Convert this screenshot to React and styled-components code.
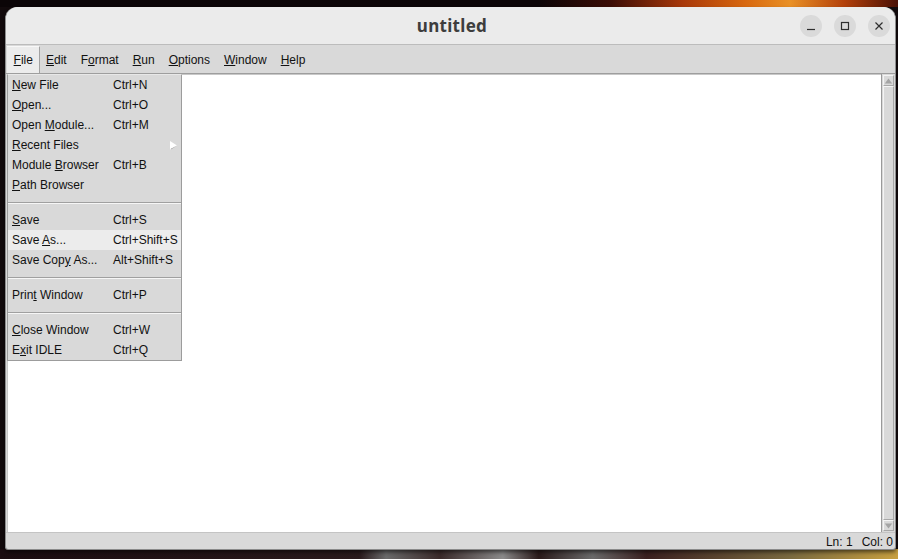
import React from 'react';
import styled, { createGlobalStyle } from 'styled-components';

const GlobalStyle = createGlobalStyle`
    html, body {
        margin: 0;
        padding: 0;
        background: #120a0c;
        overflow: hidden;
    }
`;

const fileMenu = [
    { label: 'New File', key: 'N', accel: 'Ctrl+N' },
    { label: 'Open...', key: 'O', accel: 'Ctrl+O' },
    { label: 'Open Module...', key: 'M', accel: 'Ctrl+M' },
    { label: 'Recent Files', key: 'R', sub: true },
    { label: 'Module Browser', key: 'B', accel: 'Ctrl+B' },
    { label: 'Path Browser', key: 'P' },
    { sep: true },
    { label: 'Save', key: 'S', accel: 'Ctrl+S' },
    { label: 'Save As...', key: 'A', accel: 'Ctrl+Shift+S', hover: true },
    { label: 'Save Copy As...', key: 'y', accel: 'Alt+Shift+S' },
    { sep: true },
    { label: 'Print Window', key: 't', accel: 'Ctrl+P' },
    { sep: true },
    { label: 'Close Window', key: 'C', accel: 'Ctrl+W' },
    { label: 'Exit IDLE', key: 'x', accel: 'Ctrl+Q' },
];

const menus = [
    { label: 'File', key: 'F' },
    { label: 'Edit', key: 'E' },
    { label: 'Format', key: 'o' },
    { label: 'Run', key: 'R' },
    { label: 'Options', key: 'O' },
    { label: 'Window', key: 'W' },
    { label: 'Help', key: 'H' },
];

const Mnemonic = ({ text, letter }) => {
    const i = text.indexOf(letter);
    if (i < 0) return text;
    return (
        <>
            {text.slice(0, i)}
            <u>{text[i]}</u>
            {text.slice(i + 1)}
        </>
    );
};

const App = () => {
    return (
        <Desktop>
            <GlobalStyle />
            <Window>
                <TitleBar>
                    <span />
                    <Title>untitled</Title>
                    <Controls>
                        <RoundButton>
                            <svg width="10" height="10" viewBox="0 0 10 10">
                                <line x1="1" y1="8.5" x2="9" y2="8.5" stroke="#2e2e2e" strokeWidth="1.2" />
                            </svg>
                        </RoundButton>
                        <RoundButton>
                            <svg width="10" height="10" viewBox="0 0 10 10">
                                <rect x="1.5" y="1.5" width="7" height="7" fill="none" stroke="#2e2e2e" strokeWidth="1.2" />
                            </svg>
                        </RoundButton>
                        <RoundButton>
                            <svg width="10" height="10" viewBox="0 0 10 10">
                                <path d="M1.5 1.5 L8.5 8.5 M8.5 1.5 L1.5 8.5" stroke="#2e2e2e" strokeWidth="1.2" />
                            </svg>
                        </RoundButton>
                    </Controls>
                </TitleBar>
                <MenuBar>
                    {menus.map((m) => (
                        <MenuTitle key={m.label} $active={m.label === 'File'}>
                            <Mnemonic text={m.label} letter={m.key} />
                        </MenuTitle>
                    ))}
                </MenuBar>
                <EditorRow>
                    <Editor />
                    <Scrollbar>
                        <ArrowBox>
                            <svg width="11" height="8" viewBox="0 0 11 8">
                                <polygon points="5.5,1 10,7 1,7" fill="#a4a4a4" />
                            </svg>
                        </ArrowBox>
                        <Slider />
                        <ArrowBox>
                            <svg width="11" height="8" viewBox="0 0 11 8">
                                <polygon points="1,1 10,1 5.5,7" fill="#a4a4a4" />
                            </svg>
                        </ArrowBox>
                    </Scrollbar>
                </EditorRow>
                <StatusBar>
                    <span>Ln: 1</span>
                    <span>Col: 0</span>
                </StatusBar>
                <Dropdown>
                    {fileMenu.map((item, i) =>
                        item.sep ? (
                            <Separator key={i} />
                        ) : (
                            <DropItem key={i} $hover={item.hover}>
                                <span>
                                    <Mnemonic text={item.label} letter={item.key} />
                                </span>
                                <span>{item.accel}</span>
                                {item.sub && (
                                    <SubArrow width="7" height="9" viewBox="0 0 7 9">
                                        <polygon points="0,0 7,4.5 0,9" fill="#ffffff" />
                                        <polygon points="2,7.2 7,4.5 0,9" fill="#6e6e6e" />
                                    </SubArrow>
                                )}
                            </DropItem>
                        )
                    )}
                </Dropdown>
            </Window>
        </Desktop>
    );
};

const Desktop = styled.div`
    width: 898px;
    height: 559px;
    overflow: hidden;
    background:
        linear-gradient(90deg, #0b0507 0%, #0c0507 60%, #3b0c05 68%, #a8380a 76%, #d8680f 83%, #e99025 88%, #b3400a 94%, #4a1005 100%) top / 100% 7px no-repeat,
        linear-gradient(90deg, #1a0c10 0%, #2a1a1c 40%, #6a6a6a 43%, #3a2a2a 49%, #8a8a8a 56%, #2a1a1a 60%, #6a6a6a 66%, #3a2020 72%, #7a6a40 88%, #c8a040 100%) bottom / 100% 10px no-repeat,
        #120a0c;
    padding-top: 7px;
    padding-left: 5px;
    box-sizing: border-box;
    font-family: 'Liberation Sans', Arial, sans-serif;
`;

const Window = styled.div`
    position: relative;
    width: 891px;
    height: 542px;
    box-sizing: border-box;
    display: flex;
    flex-direction: column;
    background: #d9d9d9;
    border-left: 1px solid #8e8e8e;
    border-right: 1px solid #8e8e8e;
    border-radius: 12px 12px 3px 3px;
    box-shadow: 0 1px 0 #8a8a8a, 0 3px 4px rgba(0, 0, 0, 0.6);
`;

const TitleBar = styled.div`
    height: 37px;
    flex: none;
    display: grid;
    grid-template-columns: 1fr auto 1fr;
    align-items: center;
    background: #ebebeb;
    border-bottom: 1px solid #bcbcbc;
    border-radius: 12px 12px 0 0;
    padding: 0 5px 0 0;
`;

const Title = styled.div`
    font-family: 'Noto Sans', 'DejaVu Sans', sans-serif;
    font-weight: 700;
    font-size: 17px;
    letter-spacing: 0.3px;
    color: #3d3d3d;
    padding-left: 8px;
`;

const Controls = styled.div`
    justify-self: end;
    display: flex;
    gap: 12px;
    padding-top: 1px;
`;

const RoundButton = styled.div`
    width: 22px;
    height: 22px;
    border-radius: 50%;
    background: #dadada;
    display: flex;
    align-items: center;
    justify-content: center;
`;

const MenuBar = styled.div`
    height: 29px;
    flex: none;
    display: flex;
    align-items: stretch;
    padding: 1px 0 0 1px;
    box-sizing: border-box;
    border-bottom: 1px solid #9e9e9e;
    font-size: 12px;
    color: #111;
`;

const MenuTitle = styled.div`
    display: flex;
    align-items: center;
    padding: 0 6.4px 1px 6.6px;
    box-sizing: border-box;
    background: ${(p) => (p.$active ? '#ececec' : 'transparent')};
    border-right: 1px solid ${(p) => (p.$active ? '#a2a2a2' : 'transparent')};
    border-top: 1px solid ${(p) => (p.$active ? '#f8f8f8' : 'transparent')};
    margin-right: ${(p) => (p.$active ? '-1px' : '0')};
`;

const EditorRow = styled.div`
    flex: 1;
    display: flex;
    min-height: 0;
    padding-left: 1px;
`;

const Editor = styled.div`
    flex: 1;
    background: #ffffff;
    border-left: 1px solid #c8c8c8;
    border-top: 1px solid #c8c8c8;
`;

const Scrollbar = styled.div`
    width: 14px;
    flex: none;
    display: flex;
    flex-direction: column;
    background: #d9d9d9;
    border-left: 1px solid #9a9a9a;
    padding: 1px 1px 1px 1px;
    box-sizing: border-box;
`;

const ArrowBox = styled.div`
    height: 11px;
    flex: none;
    display: flex;
    align-items: center;
    justify-content: center;
    border-top: 1px solid #f4f4f4;
    border-left: 1px solid #f4f4f4;
    border-bottom: 1px solid #a8a8a8;
    border-right: 1px solid #a8a8a8;
    box-sizing: border-box;
`;

const Slider = styled.div`
    flex: 1;
    border-top: 1px solid #f4f4f4;
    border-left: 1px solid #f4f4f4;
    border-bottom: 1px solid #a8a8a8;
    border-right: 1px solid #a8a8a8;
`;

const StatusBar = styled.div`
    height: 17px;
    flex: none;
    box-sizing: border-box;
    display: flex;
    justify-content: flex-end;
    align-items: center;
    gap: 9px;
    padding: 1px 2px 0 0;
    border-top: 1px solid #c4c4c4;
    font-size: 12px;
    color: #111;
`;

const Dropdown = styled.div`
    position: absolute;
    top: 67px;
    left: 1px;
    width: 175px;
    box-sizing: border-box;
    background: #d9d9d9;
    border: 1px solid #9c9c9c;
    border-top-color: #e8e8e8;
    font-size: 12px;
    color: #111;
`;

const DropItem = styled.div`
    position: relative;
    height: 20px;
    display: grid;
    grid-template-columns: 101px auto;
    align-items: center;
    padding-left: 4px;
    background: ${(p) => (p.$hover ? '#ececec' : 'transparent')};
    white-space: nowrap;
`;

const SubArrow = styled.svg`
    position: absolute;
    right: 4px;
    top: 6px;
`;

const Separator = styled.div`
    height: 15px;
    display: flex;
    align-items: center;
    &::after {
        content: '';
        flex: 1;
        height: 0;
        border-top: 1px solid #a0a0a0;
        border-bottom: 1px solid #f6f6f6;
    }
`;

export default App;
